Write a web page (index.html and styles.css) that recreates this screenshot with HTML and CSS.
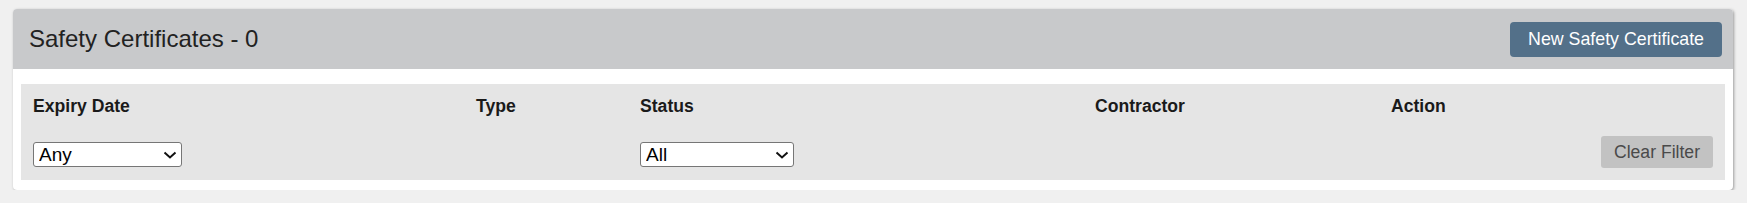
FILE: index.html
```html
<!DOCTYPE html>
<html lang="en">
<head>
<meta charset="utf-8">
<title>Safety Certificates</title>
<link rel="stylesheet" href="styles.css">
</head>
<body>
<div class="card">
  <div class="card-header">
    <h2 class="title">Safety Certificates - 0</h2>
    <button class="btn-primary" type="button">New Safety Certificate</button>
  </div>
  <div class="filter-panel">
    <div class="col-label">Expiry Date</div>
    <div class="col-label">Type</div>
    <div class="col-label">Status</div>
    <div class="col-label">Contractor</div>
    <div class="col-label">Action</div>

    <div class="cell">
      <span class="select-wrap select-any">
        <select class="select">
          <option>Any</option>
        </select>
        <svg class="chev" viewBox="0 0 14 8" width="14" height="8"><path d="M1.5 1.5 L7 6.5 L12.5 1.5" fill="none" stroke="#111" stroke-width="2"/></svg>
      </span>
    </div>
    <div class="cell"></div>
    <div class="cell">
      <span class="select-wrap select-all">
        <select class="select">
          <option>All</option>
        </select>
        <svg class="chev" viewBox="0 0 14 8" width="14" height="8"><path d="M1.5 1.5 L7 6.5 L12.5 1.5" fill="none" stroke="#111" stroke-width="2"/></svg>
      </span>
    </div>
    <div class="cell"></div>
    <div class="cell cell-action">
      <button class="btn-clear" type="button">Clear Filter</button>
    </div>
  </div>
</div>
</body>
</html>
```

FILE: styles.css
```css
html, body {
  margin: 0;
  padding: 0;
}
body {
  background: #f0f0f0;
  font-family: "Liberation Sans", Arial, sans-serif;
  color: #222;
  padding: 9px 14px 0 13px;
}
.card {
  background: #fff;
  border-radius: 4px;
  box-shadow: 1px 1px 3px rgba(0, 0, 0, 0.35);
  padding-bottom: 10px;
  overflow: hidden;
}
.card-header {
  background: #c8c9cb;
  height: 60px;
  display: flex;
  align-items: center;
  justify-content: space-between;
  padding: 0 11px 0 16px;
  box-sizing: border-box;
}
.title {
  margin: 0;
  font-size: 24px;
  font-weight: normal;
  color: #222;
}
.btn-primary {
  background: #537089;
  color: #fff;
  border: none;
  border-radius: 4px;
  font-family: inherit;
  font-size: 17.8px;
  height: 35px;
  padding: 0 18px;
  margin-top: 1px;
}
.filter-panel {
  background: #e5e5e5;
  margin: 15px 8px 0 8px;
  padding: 12px 12px 12px 12px;
  display: grid;
  grid-template-columns: 443px 164px 455px 296px 1fr;
  row-gap: 19px;
  align-items: end;
}
.col-label {
  font-weight: bold;
  font-size: 17.6px;
  color: #1a1a1a;
}
.cell {
  display: flex;
  align-items: flex-end;
}
.cell-action {
  justify-content: flex-end;
}
.select-wrap {
  position: relative;
  display: inline-block;
  margin-bottom: 1px;
}
.select {
  appearance: none;
  -webkit-appearance: none;
  background: #fff;
  border: 1px solid #767676;
  border-radius: 3px;
  font-family: inherit;
  font-size: 19px;
  color: #000;
  height: 25px;
  padding: 0 0 0 5px;
  margin: 0;
  display: block;
  box-sizing: border-box;
}
.select-any .select { width: 149px; }
.select-all .select { width: 154px; }
.chev {
  position: absolute;
  right: 5px;
  top: 9px;
  pointer-events: none;
}
.btn-clear {
  background: #c2c2c2;
  color: #4a4a4a;
  border: none;
  border-radius: 3px;
  font-family: inherit;
  font-size: 17.6px;
  height: 32px;
  padding: 0 13px;
}
```
